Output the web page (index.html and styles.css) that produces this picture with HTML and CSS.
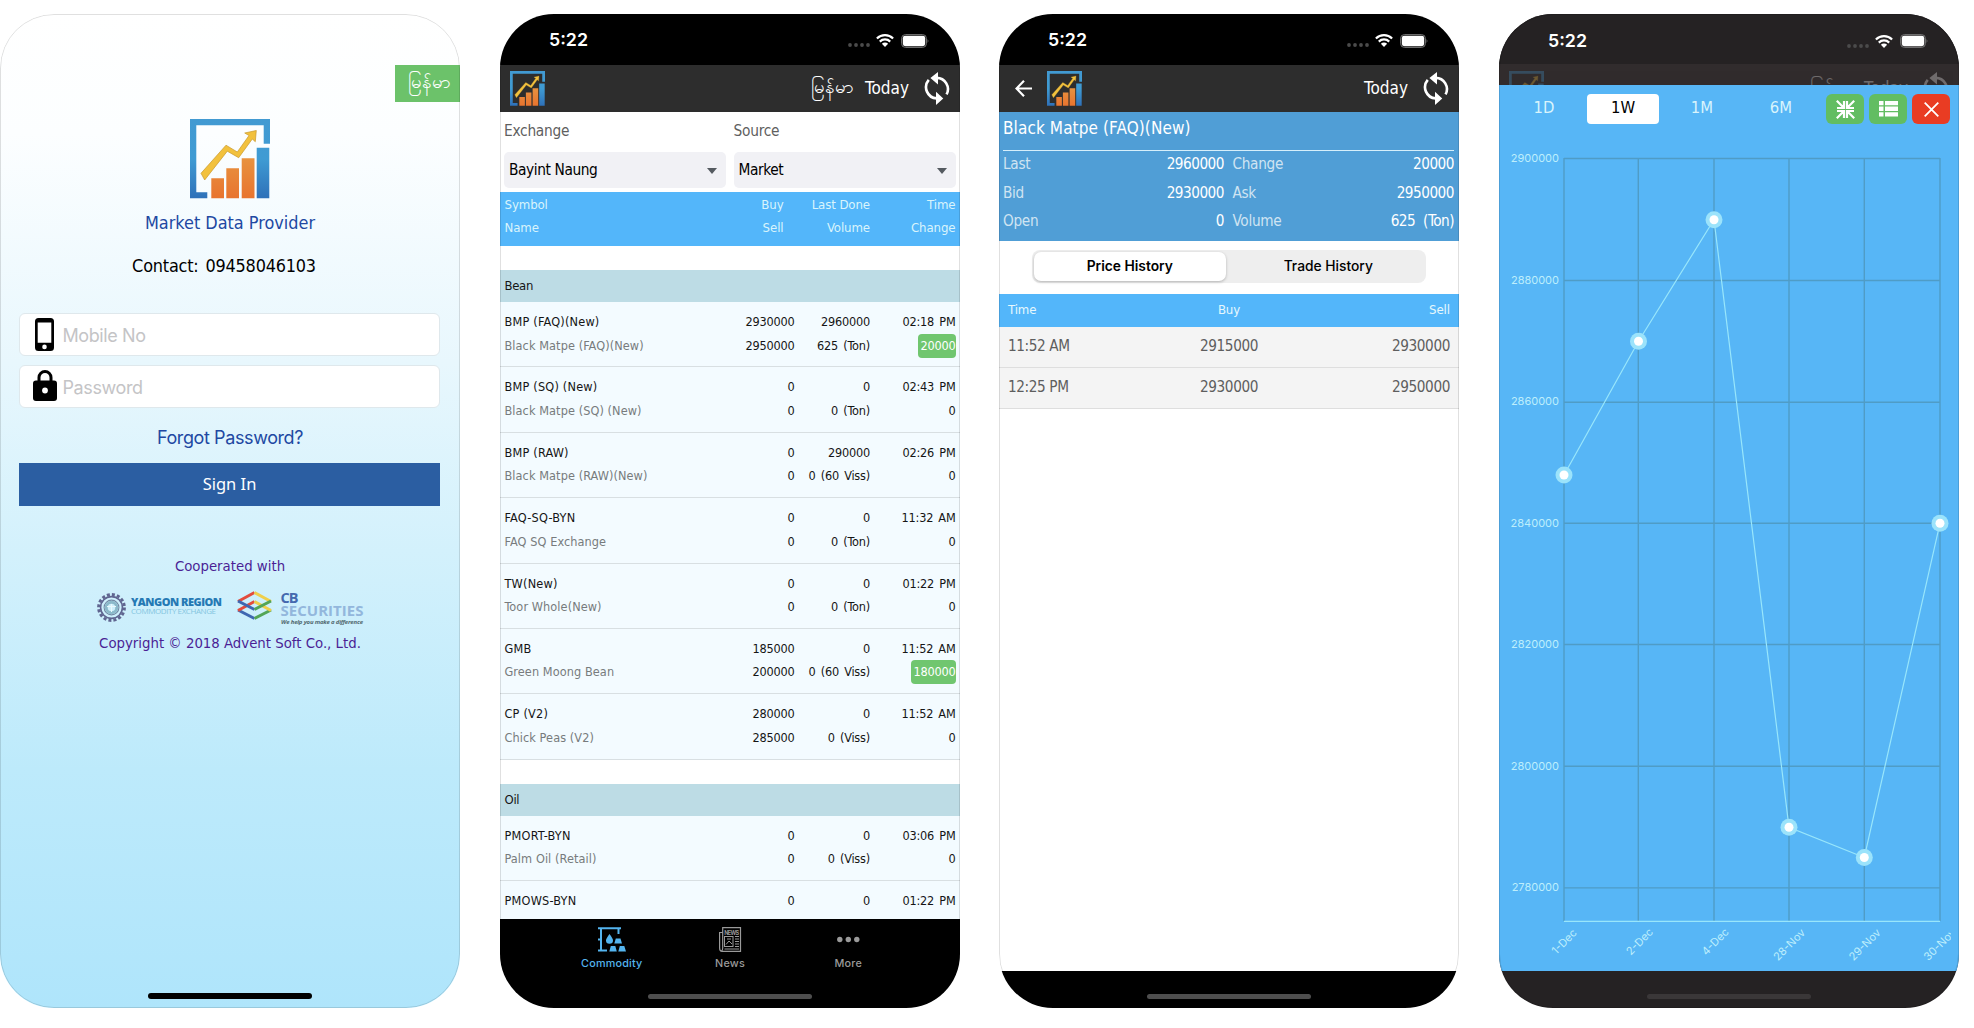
FILE: index.html
```html
<!DOCTYPE html>
<html lang="en">
<head>
<meta charset="utf-8">
<title>Market Data Provider</title>
<link rel="stylesheet" href="styles.css">
</head>
<body>
<svg class="defs" width="0" height="0">
  <defs>
    <linearGradient id="blueGrad" x1="0" y1="0" x2="0" y2="80" gradientUnits="userSpaceOnUse"><stop offset="0" stop-color="#429ad2"/><stop offset=".5" stop-color="#3f9bd3"/><stop offset="1" stop-color="#2e70b8"/></linearGradient>
    <linearGradient id="orangeGrad" x1="0" y1="0" x2="0" y2="1"><stop offset="0" stop-color="#e8923f"/><stop offset="1" stop-color="#e8742f"/></linearGradient>
    <symbol id="logo" viewBox="0 0 80 80">
      <path fill="url(#blueGrad)" d="M0 0H80V24.7H73.7V6.3H6.3V73.3H17.3V79.3H0ZM66.7 28.7H79.3V79.3H66.7Z"/>
      <path fill="url(#orangeGrad)" d="M21.3 59.3H34V79.3H21.3ZM36.3 49.3H49V79.3H36.3ZM51.7 39.3H64.5V79.3H51.7Z"/>
      <path fill="#f2c13d" stroke="#c99a2e" stroke-width=".7" d="M11 54.3 36 26.2 47.3 33 59 16.5 54.7 14 66.3 11.5 65.3 22.7 62.3 20 48.7 38.7 37.3 32.2 14.7 61Z"/>
    </symbol>
    <symbol id="refresh" viewBox="0 0 78 100">
      <path fill="none" stroke="currentColor" stroke-width="8" d="M14 24A34 34 0 0 0 38 80M38 18A34 34 0 0 1 68 68"/>
      <path fill="currentColor" d="M36 60 58 80 36 100ZM42 0 19 18 42 38Z"/>
    </symbol>
    <symbol id="wifi" viewBox="0 0 18 13">
      <path fill="none" stroke="currentColor" stroke-width="2.2" d="M.9 4.5A11.6 11.6 0 0 1 17.1 4.5M3.8 7.6A7.4 7.4 0 0 1 14.2 7.6"/>
      <path fill="currentColor" d="M5.9 9.8A4.4 4.4 0 0 1 12.1 9.8L9 13Z"/>
    </symbol>
    <symbol id="battery" viewBox="0 0 29 14">
      <rect x=".6" y=".6" width="24.8" height="12.8" rx="3.8" fill="none" stroke="#777" stroke-width="1"/>
      <rect x="1.8" y="1.8" width="22.4" height="10.4" rx="2.4" fill="#fff"/>
      <path fill="#777" d="M26.6 5Q28.4 7 26.6 9Z"/>
    </symbol>
    <symbol id="dots" viewBox="0 0 22 4">
      <g fill="#4b4b4b"><circle cx="2" cy="2" r="1.9"/><circle cx="8" cy="2" r="1.9"/><circle cx="14" cy="2" r="1.9"/><circle cx="20" cy="2" r="1.9"/></g>
    </symbol>
  </defs>
</svg>

<main class="gallery">
  <section class="phone login">
    <div class="lang">မြန်မာ</div>
    <svg class="brand"><use href="#logo"/></svg>
    <h1 class="name">Market Data Provider</h1>
    <p class="contact">Contact: 09458046103</p>
    <label class="field">
      <svg width="19" height="33" viewBox="0 0 19 33"><path fill-rule="evenodd" d="M3.5 0H15.500Q19 0 19 3.500V29.500Q19 33 15.500 33H3.500Q0 33 0 29.500V3.500Q0 0 3.500 0ZM2.700 4.500V24.800H16.300V4.500Z"/><circle cx="9.500" cy="28.900" r="2.300" fill="#fff"/></svg>
      <span>Mobile No</span>
    </label>
    <label class="field lock">
      <svg width="24" height="31" viewBox="0 0 24 31"><path fill="none" stroke="#000" stroke-width="3" d="M6 12V7.500A5.800 5.800 0 0 1 18 7.500V12"/><rect y="10.500" width="24" height="20.500" rx="3"/><circle cx="12" cy="20.500" r="2.900" fill="#fff"/></svg>
      <span>Password</span>
    </label>
    <a class="forgot">Forgot Password?</a>
    <button class="signin">Sign In</button>
    <p class="coop">Cooperated with</p>
    <div class="partners">
      <svg width="270" height="40" viewBox="0 0 270 40">
        <g fill="none" stroke="#5f6590">
          <circle cx="15.500" cy="22.500" r="12.900" stroke-width="3" stroke-dasharray="3 2.065"/>
          <circle cx="15.500" cy="22.500" r="10.900" stroke-width="1.600"/>
          <circle cx="15.500" cy="22.500" r="7.400" stroke="#7289a4" stroke-width="1.100"/>
          <circle cx="15.500" cy="22.500" r="5.300" stroke="#8bb9ca" stroke-width="3"/>
          <path stroke="#e9f8fc" d="M11 21.500H20M15.500 19V27"/>
        </g>
        <text x="35" y="21.200" textLength="91" class="yr">YANGON REGION</text>
        <text x="35" y="28.600" textLength="85" class="ce">COMMODITY EXCHANGE</text>
        <g fill="none" stroke-width="3" stroke-linejoin="miter">
          <path stroke="#3f67b1" d="M142 25 158.500 33.500"/>
          <path stroke="#53a556" d="M158.500 33.500 175 25"/>
          <path stroke="#e24c3d" d="M142 16.500 158.500 7.500M142 25.500 158.500 16.500"/>
          <path stroke="#efcf4c" d="M158.500 7.500 175 16.500M158.500 16.500 175 25.500"/>
          <path stroke="#3f67b1" d="M142 16 158.500 24.500"/><path stroke="#53a556" d="M158.500 24.500 175 16"/>
        </g>
        <text x="184.500" y="17.800" textLength="18" class="cb">CB</text>
        <text x="184.500" y="31" textLength="83" class="sec">SECURITIES</text>
        <text x="185" y="39" textLength="82" class="tag">We help you make a difference</text>
      </svg>
    </div>
    <p class="copy">Copyright © 2018 Advent Soft Co., Ltd.</p>
    <i class="home"></i>
  </section>

  <section class="phone market">
    <div class="status"><span>5:22</span><svg class="s-dots"><use href="#dots"/></svg><svg class="s-wifi"><use href="#wifi"/></svg><svg class="s-batt"><use href="#battery"/></svg></div>
    <header class="appbar"><svg class="mark"><use href="#logo"/></svg><b class="my">မြန်မာ</b><b class="today">Today</b><svg class="sync"><use href="#refresh"/></svg></header>
    <div class="filters">
      <div><label>Exchange</label><div class="select">Bayint Naung</div></div>
      <div><label>Source</label><div class="select">Market</div></div>
    </div>
    <div class="row thead"><span>Symbol</span><span>Buy</span><span>Last Done</span><span>Time</span><span>Name</span><span>Sell</span><span>Volume</span><span>Change</span></div>
    <div class="list">
      <h2>Bean</h2>
      <div class="row"><span>BMP (FAQ)(New)</span><span>2930000</span><span>2960000</span><span>02:18 PM</span><span>Black Matpe (FAQ)(New)</span><span>2950000</span><span>625 (Ton)</span><span><em>20000</em></span></div>
      <div class="row"><span>BMP (SQ) (New)</span><span>0</span><span>0</span><span>02:43 PM</span><span>Black Matpe (SQ) (New)</span><span>0</span><span>0 (Ton)</span><span>0</span></div>
      <div class="row"><span>BMP (RAW)</span><span>0</span><span>290000</span><span>02:26 PM</span><span>Black Matpe (RAW)(New)</span><span>0</span><span>0 (60 Viss)</span><span>0</span></div>
      <div class="row"><span>FAQ-SQ-BYN</span><span>0</span><span>0</span><span>11:32 AM</span><span>FAQ SQ Exchange</span><span>0</span><span>0 (Ton)</span><span>0</span></div>
      <div class="row"><span>TW(New)</span><span>0</span><span>0</span><span>01:22 PM</span><span>Toor Whole(New)</span><span>0</span><span>0 (Ton)</span><span>0</span></div>
      <div class="row"><span>GMB</span><span>185000</span><span>0</span><span>11:52 AM</span><span>Green Moong Bean</span><span>200000</span><span>0 (60 Viss)</span><span><em>180000</em></span></div>
      <div class="row"><span>CP (V2)</span><span>280000</span><span>0</span><span>11:52 AM</span><span>Chick Peas (V2)</span><span>285000</span><span>0 (Viss)</span><span>0</span></div>
      <h2>Oil</h2>
      <div class="row"><span>PMORT-BYN</span><span>0</span><span>0</span><span>03:06 PM</span><span>Palm Oil (Retail)</span><span>0</span><span>0 (Viss)</span><span>0</span></div>
      <div class="row"><span>PMOWS-BYN</span><span>0</span><span>0</span><span>01:22 PM</span></div>
    </div>
    <nav class="tabs">
      <a class="on">
        <svg width="28" height="25" viewBox="0 0 28 25"><path fill="none" stroke="currentColor" stroke-width="2" d="M0 1.300H23M3 1V23M0 23.500H9M0 12.500H3M20.500 2V7"/><path fill="currentColor" d="M11.500 7Q8 11.500 8 13.500A3.500 3.300 0 0 0 15 13.500Q15 11.500 11.500 7ZM17.800 11.500H22.500L24 16.500H16.300ZM12.800 19H17.300L18.800 24.500H11.300ZM21.800 19H26.300L28 24.500H20.300Z"/></svg>
        Commodity</a>
      <a>
        <svg width="23" height="25" viewBox="0 0 23 25" fill="none" stroke="currentColor"><path d="M3.700 21V.6H21.500V24.300H3Q.6 24.300.6 21V5.500H3.700M3.700 21Q3.700 23.500 2.500 24" stroke-width="1.200"/><rect x="5.500" y="9.500" width="8.500" height="10"/><path d="M7 17.500 10 14 13 17M8 12H12M16 9.500H20M16 12H20M16 14.500H20M16 17H20M16 19.500H20M5.500 22H20"/><text x="5.200" y="7.600" textLength="14.800" class="newsword">NEWS</text></svg>
        News</a>
      <a>
        <svg width="23" height="25" viewBox="0 0 23 25" fill="currentColor"><circle cx="2.800" cy="12.500" r="2.700"/><circle cx="11.300" cy="12.500" r="2.700"/><circle cx="19.800" cy="12.500" r="2.700"/></svg>
        More</a>
    </nav>
    <i class="home"></i>
  </section>

  <section class="phone detail">
    <div class="status"><span>5:22</span><svg class="s-dots"><use href="#dots"/></svg><svg class="s-wifi"><use href="#wifi"/></svg><svg class="s-batt"><use href="#battery"/></svg></div>
    <header class="appbar"><svg class="back" viewBox="0 0 17 17"><path fill="none" stroke="#fff" stroke-width="2.200" d="M17 8.500H1.500M9 .8 1.500 8.500 9 16.200"/></svg><svg class="mark"><use href="#logo"/></svg><b class="today">Today</b><svg class="sync"><use href="#refresh"/></svg></header>
    <div class="quote">
      <h2>Black Matpe (FAQ)(New)</h2>
      <dl><dt>Last</dt><dd>2960000</dd><dt>Change</dt><dd>20000</dd><dt>Bid</dt><dd>2930000</dd><dt>Ask</dt><dd>2950000</dd><dt>Open</dt><dd>0</dd><dt>Volume</dt><dd>625 (Ton)</dd></dl>
    </div>
    <div class="segment"><span class="on">Price History</span><span>Trade History</span></div>
    <div class="hist head"><span>Time</span><span>Buy</span><span>Sell</span></div>
    <div class="hist"><span>11:52 AM</span><span>2915000</span><span>2930000</span></div>
    <div class="hist"><span>12:25 PM</span><span>2930000</span><span>2950000</span></div>
    <div class="floor"></div>
    <i class="home"></i>
  </section>

  <section class="phone graph">
    <div class="status"><span>5:22</span><svg class="s-dots"><use href="#dots"/></svg><svg class="s-wifi"><use href="#wifi"/></svg><svg class="s-batt"><use href="#battery"/></svg></div>
    <div class="peek"><header class="appbar"><svg class="mark"><use href="#logo"/></svg><b class="my">မြန်မာ</b><b class="today">Today</b><svg class="sync"><use href="#refresh"/></svg></header></div>
    <div class="modal">
      <div class="ranges">
        <span>1D</span><span class="on">1W</span><span>1M</span><span>6M</span>
        <div class="acts">
          <i><svg width="19" height="19" viewBox="0 0 19 19" fill="none" stroke="#fff" stroke-width="2.200"><path d="M.8.8 7 7M8 1V8H1M18.200.8 12 7M11 1V8H18M.8 18.200 7 12M8 18V11H1M18.200 18.200 12 12M11 18V11H18"/></svg></i>
          <i><svg width="19" height="16" viewBox="0 0 19 16" fill="#fff"><path d="M0 0H4.500V4.300H0ZM6 0H19V4.300H6ZM0 5.600H4.500V9.900H0ZM6 5.600H19V9.900H6ZM0 11.200H4.500V15.500H0ZM6 11.200H19V15.500H6Z"/></svg></i>
          <i class="close"><svg width="15" height="15" viewBox="0 0 15 15" fill="none" stroke="#fff" stroke-width="1.800"><path d="M.7.7 14.300 14.300M14.300.7.7 14.300"/></svg></i>
        </div>
      </div>
      <svg class="chart" width="452" height="847" viewBox="0 0 452 847">
        <path class="grid" d="M65 34.500H441M65 156.500H441M65 278.200H441M65 399.200H441M65 520.500H441M65 642.300H441M65 763.900H441M65 34V797M139.300 34V797M215 34V797M290 34V797M365.300 34V797M441 34V797"/>
        <path class="axis" d="M65 797.300H441"/>
        <path class="series" d="M65 351 139.500 217.200 215 95.700 290 703.300 365.300 733.500 441 399.200"/>
        <g class="halo"><circle cx="65" cy="351" r="8.500"/><circle cx="139.500" cy="217.200" r="8.500"/><circle cx="215" cy="95.700" r="8.500"/><circle cx="290" cy="703.300" r="8.500"/><circle cx="365.300" cy="733.500" r="8.500"/><circle cx="441" cy="399.200" r="8.500"/></g>
        <g class="dot"><circle cx="65" cy="351" r="4.500"/><circle cx="139.500" cy="217.200" r="4.500"/><circle cx="215" cy="95.700" r="4.500"/><circle cx="290" cy="703.300" r="4.500"/><circle cx="365.300" cy="733.500" r="4.500"/><circle cx="441" cy="399.200" r="4.500"/></g>
        <g class="ylab"><text x="60" y="38">2900000</text><text x="60" y="159.500">2880000</text><text x="60" y="281">2860000</text><text x="60" y="402.500">2840000</text><text x="60" y="524">2820000</text><text x="60" y="646">2800000</text><text x="60" y="767.300">2780000</text></g>
        <g class="xlab">
          <text transform="translate(65 817.500) rotate(-45)" dy="4">1-Dec</text>
          <text transform="translate(140.500 817.500) rotate(-45)" dy="4">2-Dec</text>
          <text transform="translate(216 817.500) rotate(-45)" dy="4">4-Dec</text>
          <text transform="translate(290 820.500) rotate(-45)" dy="4">28-Nov</text>
          <text transform="translate(365.500 820.500) rotate(-45)" dy="4">29-Nov</text>
          <text transform="translate(440.500 820.500) rotate(-45)" dy="4">30-Nov</text>
        </g>
      </svg>
    </div>
    <i class="home"></i>
  </section>
</main>
</body>
</html>
```
FILE: styles.css
```css
* { box-sizing: border-box; margin: 0; padding: 0; }
body { background: #fff; font-family: "DejaVu Sans Condensed", "DejaVu Sans", sans-serif; font-stretch: condensed; overflow: hidden; }
svg { display: block; flex: none; }
.defs { position: absolute; }
.gallery { display: grid; grid-template-columns: 500px 499px 500px 460px; height: 1028px; padding-top: 14px; }
.phone { position: relative; width: 460px; height: 994px; border-radius: 54px; overflow: hidden; display: flex; flex-direction: column; background: #fff; }
.phone::after { content: ""; position: absolute; inset: 0; border-radius: 54px; border: 1.5px solid rgba(0, 0, 0, .12); pointer-events: none; }
.home { position: absolute; left: 148px; bottom: 9px; width: 164px; height: 5.5px; border-radius: 3px; background: #4e4e4e; }

/* Login */
.login { background: linear-gradient(#fff 0, #fcfeff 12%, #e8f7fd 35%, #d3f1fc 54%, #bdeafb 76%, #afe5fb 100%); align-items: center; }
.login .home { background: #000; bottom: 9.500px; }
.lang { align-self: flex-end; margin-top: 51px; width: 65px; height: 37px; background: #6cc26a; color: #fff; font-size: 18.500px; line-height: 34px; padding-left: 13px; white-space: nowrap; }
.brand { width: 80px; height: 80px; margin: 17px 1px 0 0; }
.name { font-size: 17.900px; font-weight: 400; line-height: 24px; color: #2148a2; margin-top: 12px; }
.contact { font-size: 17.900px; letter-spacing: -.2px; word-spacing: 2px; line-height: 24px; margin: 19px 12px 0 0; }
.field { width: 421px; height: 43px; margin: 35px 1px 0 0; background: #fff; border: 1px solid #dfe8ec; border-radius: 6px; display: flex; align-items: center; padding-left: 15px; color: #c4c4c6; font: 18px Inter, sans-serif; }
.field span { margin-left: 8.500px; padding-top: 1px; letter-spacing: -.4px; }
.field.lock { margin-top: 9px; padding-left: 13px; }
.field.lock span { margin-left: 5.500px; }
.field.lock svg { margin-top: -2px; }
.forgot { font: 18px/24px Inter, sans-serif; letter-spacing: -.4px; color: #2148a2; margin-top: 18px; }
.signin { width: 421px; height: 43px; margin: 13px 1px 0 0; border: 0; background: #2b5ea2; color: #fff; font: 16.500px/41px "Noto Sans", sans-serif; padding-bottom: 2px; }
.coop { font-size: 14.800px; line-height: 20px; margin-top: 50px; color: #4b1f95; }
.partners { margin: 9px 2px 0 0; padding-left: 4px; }
.yr { font: 800 11px "Open Sans", sans-serif; fill: #2579b4; }
.ce { font: 8px "Open Sans", sans-serif; fill: #83c5df; }
.cb { font: 700 14.500px "Open Sans", sans-serif; fill: #4569ae; }
.sec { font: 700 15px "Open Sans", sans-serif; fill: #93b7dc; }
.tag { font: italic 700 6px "Open Sans", sans-serif; fill: #536a70; }
.copy { font-size: 14.800px; line-height: 20px; margin-top: 8px; color: #4b1f95; }

/* Status and app bars */
.status { flex: none; height: 51px; background: #000; color: #fff; display: flex; align-items: center; padding: 2px 30px 0 49px; }
.status span { font: 600 17.800px/24px Inter, sans-serif; margin: -1px auto 0 0; }
.s-dots { width: 22px; height: 4px; margin: 9px 6px 0 0; }
.s-wifi { width: 18px; height: 13px; margin-right: 7px; }
.s-batt { width: 29px; height: 14px; }
.appbar { flex: none; height: 47px; background: #2d2d2d; color: #fff; display: flex; align-items: center; padding: 0 10px 0 10px; }
.appbar b { font-weight: 400; font-size: 17px; line-height: 24px; white-space: nowrap; }
.mark { width: 35px; height: 35px; margin-right: auto; }
.appbar .my { font-size: 18.500px; margin: -3px 11px 0 0; }
.today { margin-top: -2px; }
.sync { width: 26px; height: 33px; margin-left: 15px; }
.back { width: 17px; height: 17px; margin: 0 15px 0 6px; }

/* Market list */
.filters { flex: none; height: 80px; display: grid; grid-template-columns: 222px 222px; gap: 7.500px; padding: 7px 4px 0; }
.filters label { display: block; font-size: 15.300px; letter-spacing: -.25px; line-height: 24px; color: #5f5f5f; margin-bottom: 9px; }
.select { height: 36px; background: #f1f1f5; border-radius: 5px; font-size: 15.300px; letter-spacing: -.4px; line-height: 33px; padding: 0 9px 0 5px; display: flex; justify-content: space-between; align-items: center; }
.select::after { content: ""; border: 5.500px solid transparent; border-top: 6px solid #555a60; border-bottom: 0; margin-top: 1px; }
.row { flex: none; display: grid; grid-template-columns: 200px 90px 75.500px 85.500px; grid-auto-rows: 23.500px; padding: 8px 0 0 4.500px; height: 65.400px; background: #f3fbff; border-bottom: 1px solid #d8dfe2; font-size: 12.600px; letter-spacing: -.2px; line-height: 23.500px; color: #151515; white-space: nowrap; }
.row span { text-align: right; word-spacing: 1.800px; }
.row span:nth-child(4n+1) { text-align: left; letter-spacing: .08px; word-spacing: 0; }
.row span:nth-child(1) { letter-spacing: .2px; }
.row span:nth-child(5) { color: #777b7d; }
.row em { font-style: normal; display: inline-block; background: #70c66f; color: #fff; border-radius: 4px; line-height: 24px; padding-left: 2.500px; }
.row.thead { height: 54px; grid-template-columns: 200px 79px 86.500px 85.500px; grid-auto-rows: 22.500px; padding-top: 1px; background: #53b6fa; border: 0; font-size: 13.100px; }
.row.thead span { color: #d9f4fc; letter-spacing: -.1px; word-spacing: 0; }
.list { flex: 1; min-height: 0; overflow: hidden; }
.list h2 { margin-top: 24px; height: 32px; background: #bddce5; font-size: 13px; font-weight: 400; line-height: 31px; padding-left: 4.500px; color: #151515; letter-spacing: -.3px; }
.tabs { flex: none; height: 89px; background: #000; display: grid; grid-template-columns: repeat(3, 118.200px); justify-content: center; padding: 8px 0 0 0; color: #9a9a9a; font: 500 10.800px/14px Inter, sans-serif; letter-spacing: .2px; }
.tabs a { display: flex; flex-direction: column; align-items: center; gap: 5px; }
.tabs .on { color: #54b4ee; }
.newsword { font: 700 5.500px Inter, sans-serif; fill: currentColor; stroke: none; letter-spacing: 0; }

/* Detail */
.quote { height: 129px; background: #509ed6; color: #fff; padding: 4px 5px 0 4px; }
.quote h2 { font-size: 17px; font-weight: 400; letter-spacing: .1px; line-height: 24px; height: 35px; border-bottom: 1.500px solid #d6effb; }
.quote dl { display: grid; grid-template-columns: 70px 151px 90px 1fr; line-height: 28.700px; font-size: 15.200px; letter-spacing: -.3px; margin-top: -1px; }
.quote dt { color: #cfe4f2; }
.quote dt:nth-of-type(2n) { padding-left: 8.500px; }
.quote dd { text-align: right; letter-spacing: -.5px; word-spacing: 4px; }
.segment { margin: 9px auto 11.500px 33px; width: 394px; height: 32.500px; border-radius: 8px; background: #eee; padding: 1.500px; display: grid; grid-template-columns: 1fr 1fr; text-align: center; font: 500 13.800px/29px Inter, sans-serif; }
.segment .on { background: #fff; border-radius: 7px; box-shadow: 0 1px 3px rgba(0, 0, 0, .25); margin-right: 3px; font-weight: 600; }
.segment span + span { padding-left: 3px; }
.hist { display: grid; grid-template-columns: 1fr 1fr 1fr; height: 41px; padding: 0 9px; background: #f4f4f4; border-bottom: 1px solid #dedede; color: #5e5e5e; font-size: 15.200px; letter-spacing: -.4px; line-height: 38px; text-align: center; }
.hist span:first-child { text-align: left; }
.hist span:last-child { text-align: right; }
.hist.head { height: 33px; background: #53b6fa; border: 0; color: #e6f8fd; font-size: 13.100px; letter-spacing: -.1px; line-height: 32px; }
.floor { margin-top: auto; height: 37px; background: #000; }

/* Graph */
.graph { background: #252223; }
.graph .status { background: #252223; height: 50px; padding-top: 4px; }
.peek { flex: none; height: 21px; overflow: hidden; background: #312c2d; }
.peek .appbar { background: none; opacity: .3; padding-top: 2px; }
.modal { height: 886px; background: #57b6f6; }
.graph .home { background: #3a3738; }
.ranges { height: 39px; padding: 9px 9px 0 9px; display: grid; grid-template-columns: 72px 72px 72px 72px 1fr; column-gap: 7px; color: #d9f4fc; font-size: 16.500px; line-height: 27.500px; text-align: center; }
.ranges .on { background: #fff; color: #000; border-radius: 4px; height: 30px; }
.acts { display: flex; gap: 4.800px; justify-content: flex-end; }
.acts i { width: 38px; height: 30px; border-radius: 6px; background: #62bd62; display: flex; align-items: center; justify-content: center; }
.acts .close { background: #e93c23; }
.grid { fill: none; stroke: #4f9cc6; stroke-width: 1.400; }
.axis, .series { fill: none; stroke: #98e6fb; stroke-width: 1.200; }
.halo { fill: #9be3fb; }
.dot { fill: #fff; }
.ylab, .xlab { font: 11px Inter, sans-serif; fill: #bdeefc; }
.ylab { text-anchor: end; }
.xlab { text-anchor: middle; }
```
